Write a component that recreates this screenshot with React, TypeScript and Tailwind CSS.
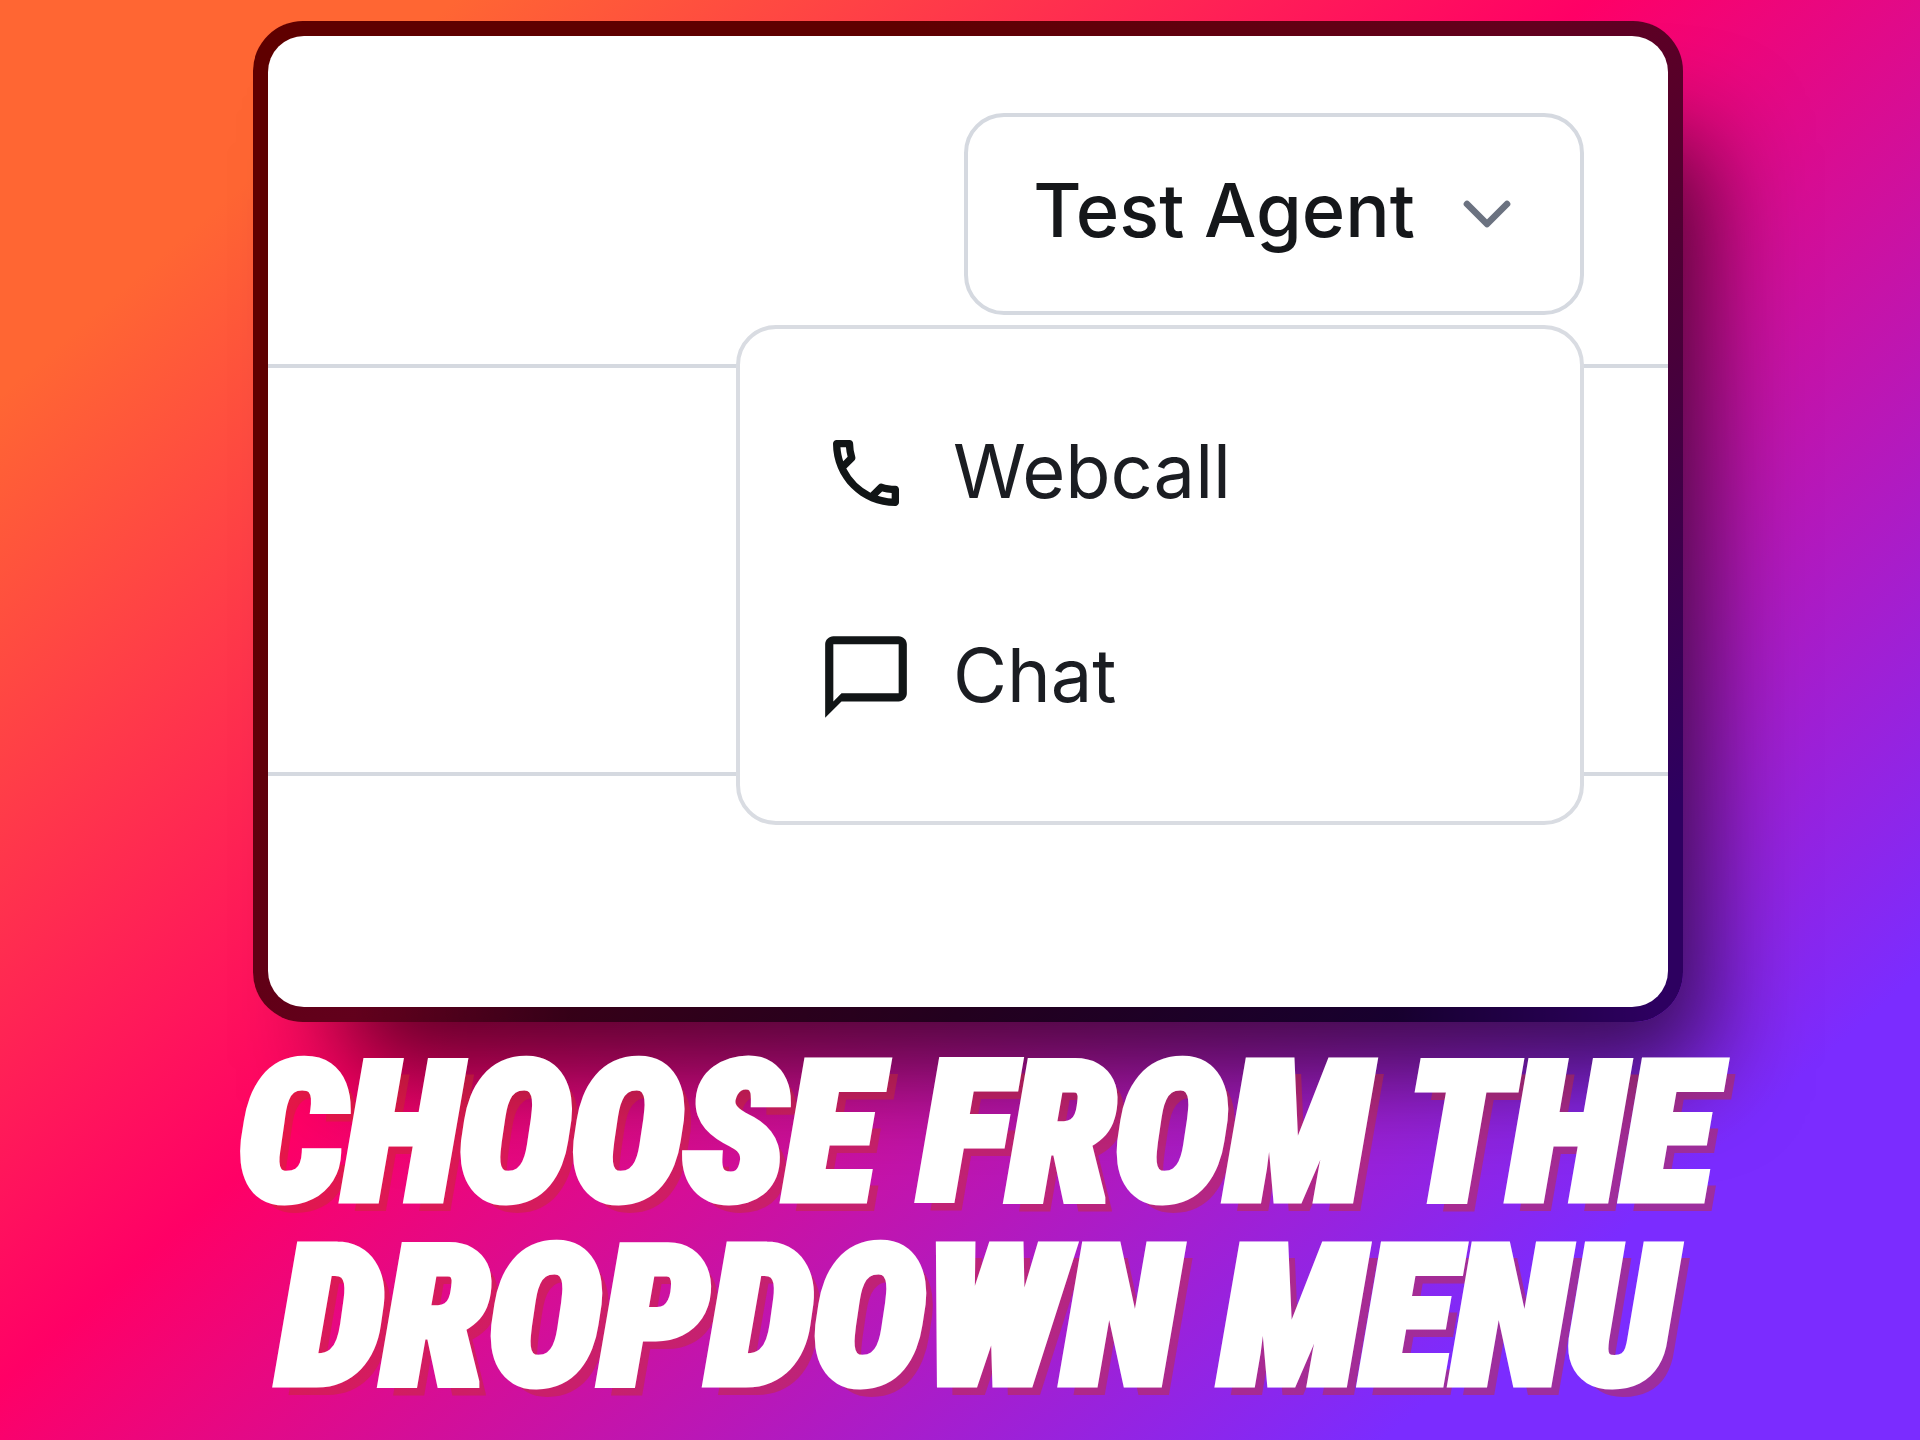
import { ChevronDown } from 'lucide-react';
import { MdChatBubbleOutline, MdOutlineCall } from 'react-icons/md';

const items = [
  { label: 'Webcall', Icon: MdOutlineCall, iconClass: 'size-[88px]' },
  { label: 'Chat', Icon: MdChatBubbleOutline, iconClass: 'size-[98px]' },
];

function AgentMenu() {
  return (
    <div className="relative">
      <button
        type="button"
        aria-haspopup="menu"
        aria-expanded="true"
        className="flex h-[202px] items-center gap-8 rounded-[40px] border-4 border-[#d5d9e0] bg-white pr-[53px] pl-[65px] text-[74px] leading-none font-medium text-[#15171a]"
      >
        <span className="pb-2">Test Agent</span>
        <ChevronDown className="size-[80px] text-[#6b7280]" strokeWidth={2} aria-hidden="true" />
      </button>
      <ul
        role="menu"
        className="absolute top-full right-0 mt-[10px] w-[848px] rounded-[40px] border-4 border-[#d9dce2] bg-white py-[42px]"
      >
        {items.map(({ label, Icon, iconClass }) => (
          <li key={label} role="none">
            <button
              type="button"
              role="menuitem"
              className="flex h-[204px] w-full items-center gap-[38px] pl-[77px] text-[74px] leading-none text-[#1b1d22]"
            >
              <span className="flex w-[98px] justify-center text-[#111516]">
                <Icon className={iconClass} aria-hidden="true" />
              </span>
              <span className="pb-1">{label}</span>
            </button>
          </li>
        ))}
      </ul>
    </div>
  );
}

export default function App() {
  return (
    <main className="min-h-screen overflow-hidden bg-[linear-gradient(139deg,#ff6633_12.7%,#ff0066_44.5%,#7b2cff_85%)] pt-[21px] font-['Inter',sans-serif]">
      <div className="mr-[237px] ml-[253px] rounded-[50px] bg-[linear-gradient(to_right,transparent_7%,rgba(0,0,0,0.4)_22%,rgba(0,0,0,0.5)_50%,rgba(0,0,0,0.5)_80%,transparent_98%),linear-gradient(139deg,#5f0000_25%,#62001e_50%,#48003a_70%,#2d0060_90%)] bg-[length:100%_24px,100%_100%] bg-bottom bg-no-repeat p-[15px] shadow-[58px_84px_100px_-36px_rgba(0,0,0,0.65)]">
        <div className="overflow-hidden rounded-[36px] bg-white">
          <header className="flex justify-end border-b-4 border-[#d5d9e0] pt-[77px] pr-[84px] pb-[49px]">
            <AgentMenu />
          </header>
          <div className="h-[408px] border-b-4 border-[#d5d9e0]" />
          <div className="h-[231px]" />
        </div>
      </div>
      <h1 className="relative mt-5 pl-8 text-center font-['Roboto_Condensed','Roboto',sans-serif] text-[192px] leading-[184px] font-black text-white italic [-webkit-text-stroke:9px_white] [text-shadow:11px_12px_0_rgba(200,48,40,0.45)]">
        CHOOSE FROM THE
        <br />
        DROPDOWN MENU
      </h1>
    </main>
  );
}
